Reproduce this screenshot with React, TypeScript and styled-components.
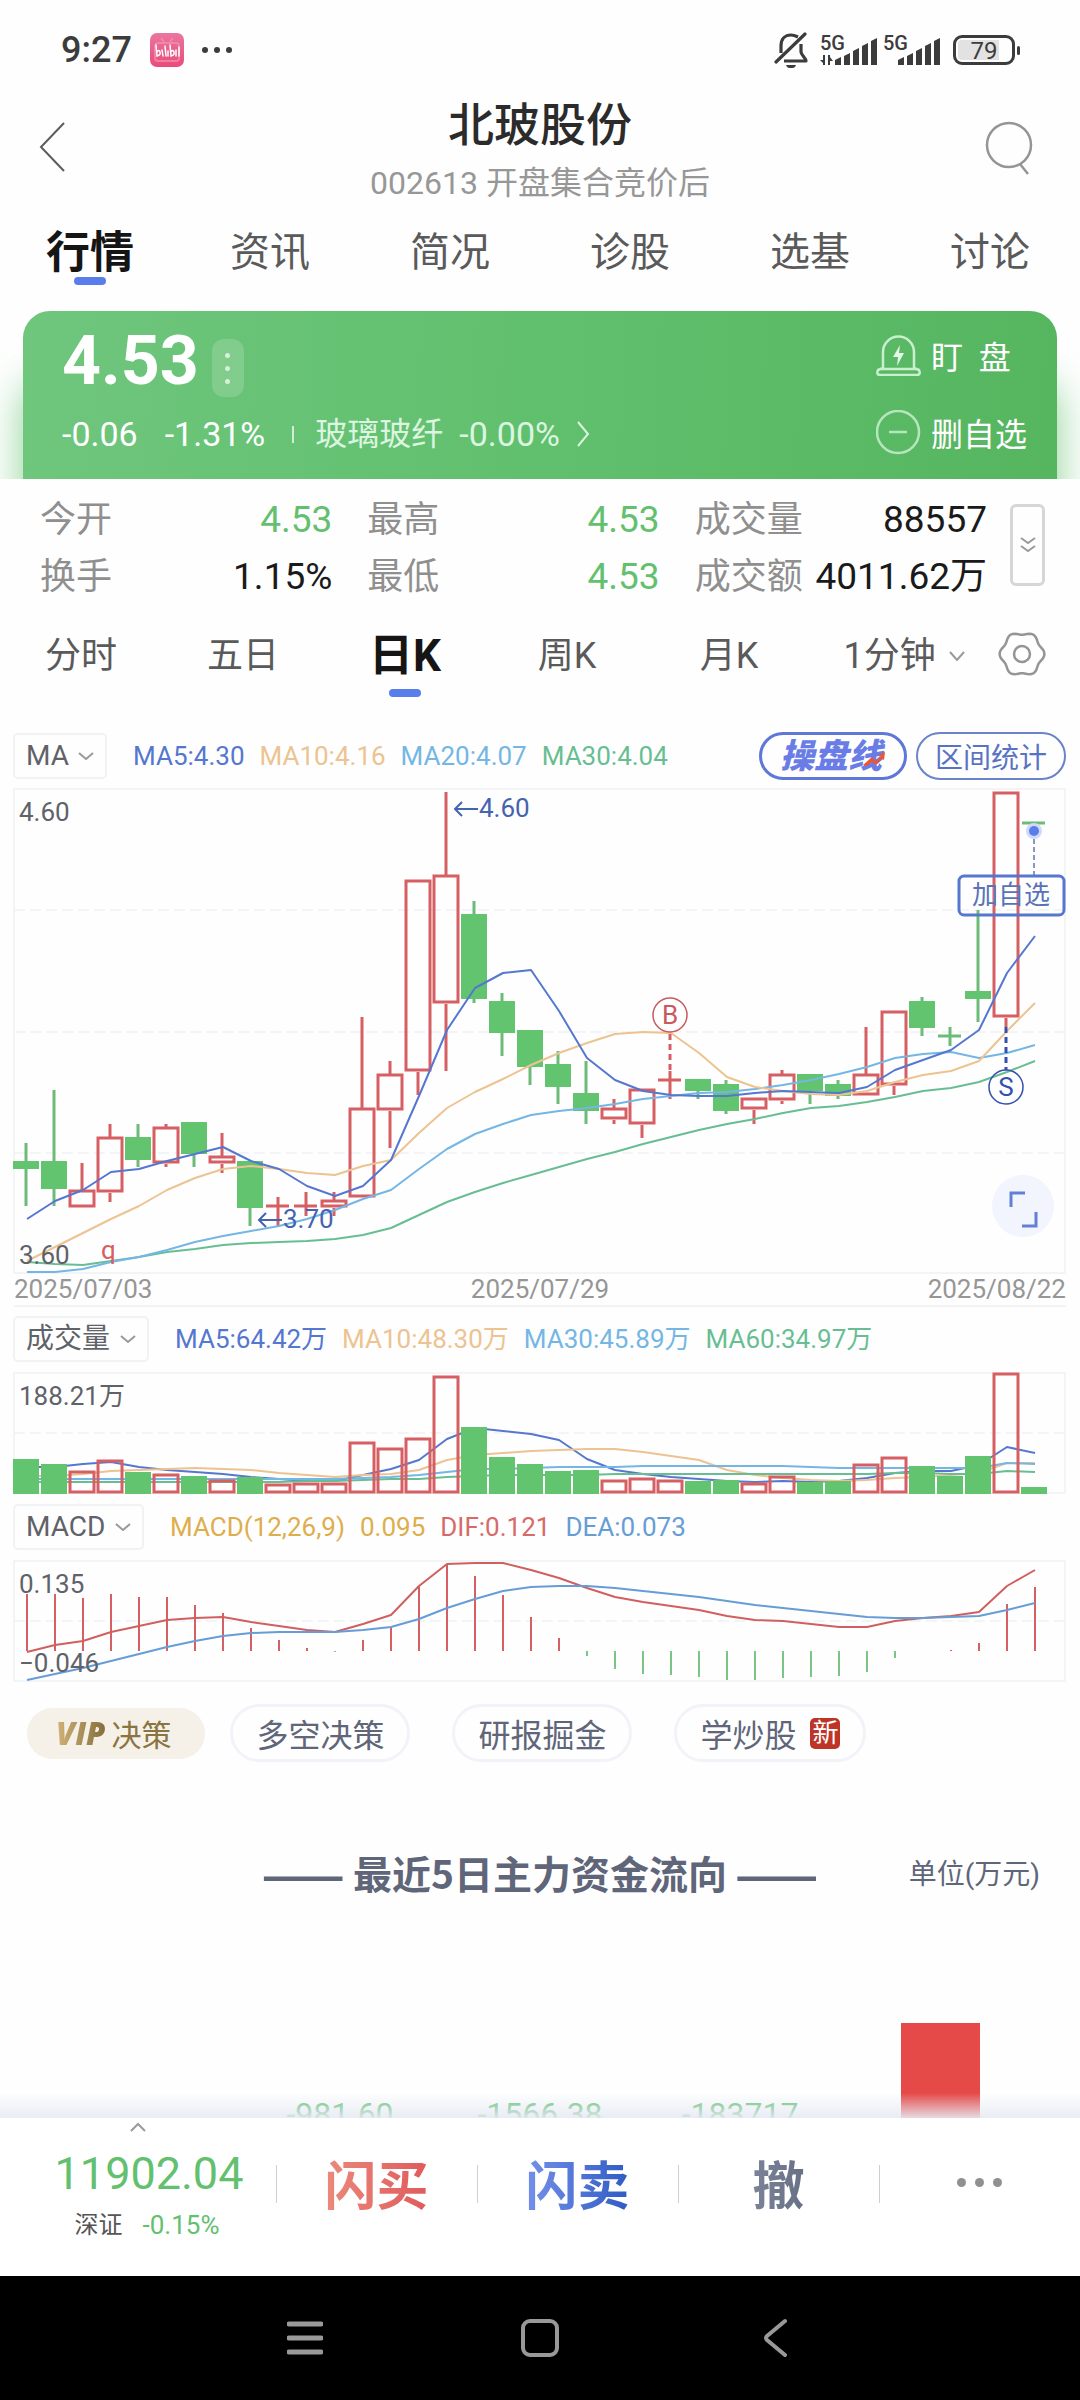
import React from 'react';
import styled, { createGlobalStyle } from 'styled-components';

const RED = '#d65f63';
const GREEN = '#63c46f';
const BLUE = '#5577cf';
const ORANGE = '#ecc391';
const SKY = '#74b6e4';
const TEAL = '#68be92';
const FONT = 'Roboto, "Noto Sans CJK SC", sans-serif';

const GlobalStyle = createGlobalStyle`
  * { box-sizing: border-box; }
  body { margin: 0; background: #fefefe; font-family: ${FONT}; color: #222; }
  button, select { font: inherit; color: inherit; background: none; border: 0; padding: 0; margin: 0; cursor: pointer; }
  a { color: inherit; text-decoration: none; }
  h1, h2, p, dl, dd { margin: 0; font-weight: 400; }
  svg { display: block; flex: none; }
`;

const Screen = styled.div`
  height: 100vh;
  display: flex;
  flex-direction: column;
  background: #fefefe;
`;

/* ---------- status bar ---------- */
const StatusBar = styled.div`
  display: flex;
  justify-content: space-between;
  align-items: center;
  height: 99px;
  flex: none;
  padding: 0 65px 0 61px;
  color: #3c3c3c;
`;
const StatusGroup = styled.div<{ $gap: number }>`
  display: flex;
  align-items: center;
  gap: ${p => p.$gap}px;
`;
const Clock = styled.span`
  font-size: 36px;
  line-height: 40px;
  font-weight: 500;
`;
const Battery = styled.div`
  position: relative;
  width: 62px;
  height: 30px;
  border: 3px solid #3c3c3c;
  border-radius: 9px;
  padding: 2px;
  &::after {
    content: '';
    position: absolute;
    right: -8px;
    top: 8px;
    width: 3px;
    height: 9px;
    border-radius: 2px;
    background: #3c3c3c;
  }
`;
const BatteryLevel = styled.div`
  width: 100%;
  height: 20px;
  border-radius: 4px;
  background: linear-gradient(90deg, #e2e2e2 79%, transparent 79%);
  text-align: center;
  font-size: 24px;
  line-height: 22px;
`;

/* ---------- header ---------- */
const Header = styled.header`
  display: grid;
  grid-template-columns: 142px 1fr 142px;
  align-items: center;
  flex: none;
`;
const HeaderButton = styled.button<{ $start?: boolean }>`
  display: flex;
  justify-content: ${p => (p.$start ? 'flex-start' : 'center')};
  && { padding: ${p => (p.$start ? '0 0 8px 38px' : '0 0 4px')}; }
`;
const Titles = styled.div`
  display: flex;
  flex-direction: column;
  align-items: center;
  gap: 12px;
`;
const StockName = styled.h1`
  && { font-weight: 500; }
  font-size: 46px;
  line-height: 52px;
  color: #2b2b2b;
`;
const StockCode = styled.p`
  font-size: 32px;
  line-height: 40px;
  color: #979797;
`;

const MainTabs = styled.nav`
  display: grid;
  grid-template-columns: repeat(6, 1fr);
  margin-top: 26px;
  flex: none;
`;
const Tab = styled.a<{ $active?: boolean; $size: number; $pad: number }>`
  position: relative;
  display: block;
  text-align: center;
  line-height: 48px;
  padding-bottom: ${p => p.$pad}px;
  font-size: ${p => (p.$active ? 44 : p.$size)}px;
  font-weight: ${p => (p.$active ? 700 : 400)};
  color: ${p => (p.$active ? '#151515' : '#5a5a5a')};
  &::after {
    content: '';
    display: ${p => (p.$active ? 'block' : 'none')};
    position: absolute;
    left: calc(50% - 16px);
    bottom: 0;
    width: 32px;
    height: 8px;
    border-radius: 4px;
    background: #5a7dec;
  }
`;

/* ---------- quote card ---------- */
const Main = styled.main`
  flex: 1;
  min-height: 0;
  overflow: hidden;
  position: relative;
`;
const CardClip = styled.section`
  overflow: hidden;
  padding: 26px 23px 0;
`;
const Card = styled.div`
  display: flex;
  justify-content: space-between;
  padding: 14px 30px 25px 39px;
  border-radius: 27px 27px 0 0;
  background: linear-gradient(93deg, #6fc67d, #5fbf6c 55%, #56b55f);
  box-shadow: 0 70px 40px rgba(99, 196, 111, 0.75);
  color: #fff;
`;
const CardLeft = styled.div`
  display: flex;
  flex-direction: column;
  gap: 17px;
`;
const PriceRow = styled.div`
  display: flex;
  align-items: flex-end;
  gap: 13px;
  height: 72px;
`;
const Price = styled.strong`
  font-size: 68px;
  line-height: 72px;
  font-weight: 700;
`;
const MoreButton = styled.button`
  display: flex;
  flex-direction: column;
  justify-content: center;
  align-items: center;
  gap: 8px;
  width: 32px;
  height: 58px;
  border-radius: 12px;
  && { background: rgba(255, 255, 255, 0.16); }
`;
const Dot = styled.span<{ $size: number; $color: string }>`
  width: ${p => p.$size}px;
  height: ${p => p.$size}px;
  border-radius: 50%;
  background: ${p => p.$color};
`;
const ChangeRow = styled.div`
  display: flex;
  align-items: center;
  font-size: 34px;
  line-height: 40px;
`;
const Change = styled.span`
  margin-right: 27px;
`;
const Divider = styled.span`
  width: 2px;
  height: 17px;
  margin-right: 21px;
  background: rgba(255, 255, 255, 0.7);
`;
const SectorLink = styled.a`
  display: flex;
  align-items: center;
  gap: 16px;
  color: #dcf5e0;
`;
const SectorName = styled.span`
  font-size: 32px;
`;
const CardActions = styled.div`
  display: flex;
  flex-direction: column;
  gap: 33px;
  padding-top: 8px;
`;
const CardAction = styled.button`
  display: flex;
  align-items: center;
  gap: 10px;
  height: 44px;
  && { font-size: 32px; }
  white-space: pre;
`;

/* ---------- stats ---------- */
const Stats = styled.section`
  display: flex;
  align-items: flex-start;
  gap: 23px;
  padding: 21px 35px 0 40px;
`;
const StatsGrid = styled.dl`
  flex: 1;
  display: grid;
  grid-template-columns: repeat(3, 1fr);
  gap: 17px 35px;
`;
const Stat = styled.div`
  display: flex;
  justify-content: space-between;
  font-size: 36px;
  line-height: 40px;
  white-space: nowrap;
`;
const StatLabel = styled.dt`
  color: #8f8f8f;
`;
const StatValue = styled.dd<{ $down?: boolean }>`
  font-size: 37px;
  color: ${p => (p.$down ? '#63c06f' : '#1a1a1a')};
`;
const ExpandButton = styled.button`
  && { border: 3px solid #d6d6d6; margin-top: 4px; }
  width: 35px;
  height: 82px;
  border-radius: 6px;
  display: flex;
  align-items: center;
  justify-content: center;
`;

/* ---------- period tabs ---------- */
const PeriodTabs = styled.nav`
  display: grid;
  grid-template-columns: repeat(5, 162fr) 188fr 82fr;
  margin-top: 35px;
`;
const SelectBox = styled.label<{ $boxed?: boolean }>`
  display: inline-grid;
  align-items: center;
  height: ${p => (p.$boxed ? 46 : 48)}px;
  border: ${p => (p.$boxed ? '2px solid #f1f2f3' : '0')};
  border-radius: 5px;
  justify-self: center;
  > * { grid-area: 1 / 1; }
  > svg { justify-self: end; margin-right: ${p => (p.$boxed ? 11 : 0)}px; pointer-events: none; }
`;
const Select = styled.select<{ $boxed?: boolean }>`
  appearance: none;
  outline: none;
  && {
    font-size: ${p => (p.$boxed ? 28 : 36)}px;
    color: ${p => (p.$boxed ? '#5f6269' : '#5a5a5a')};
    padding: ${p => (p.$boxed ? '0 36px 0 11px' : '0 28px 0 0')};
  }
  line-height: 40px;
`;
const GearButton = styled.button`
  display: flex;
  align-items: flex-start;
`;

/* ---------- charts ---------- */
const ToolRow = styled.div<{ $top: number }>`
  display: flex;
  align-items: center;
  margin-top: ${p => p.$top}px;
  padding: 0 14px 0 13px;
`;
const Legend = styled.div`
  display: flex;
  gap: 15px;
  margin-left: 26px;
  font-size: 26px;
  line-height: 32px;
  white-space: nowrap;
`;
const LegendItem = styled.span<{ $color: string }>`
  color: ${p => p.$color};
`;
const ToolButtons = styled.div`
  display: flex;
  gap: 9px;
  margin-left: auto;
`;
const Outline = styled.button<{ $brand?: boolean }>`
  && {
    border: ${p => (p.$brand ? 3 : 2)}px solid ${p => (p.$brand ? '#5f77d8' : '#6a83c9')};
    font-size: ${p => (p.$brand ? 34 : 28)}px;
    color: #5873c4;
  }
  display: flex;
  align-items: center;
  justify-content: center;
  position: relative;
  width: ${p => (p.$brand ? 148 : 150)}px;
  height: 48px;
  border-radius: 24px;
`;
const BrandText = styled.span`
  font-style: italic;
  font-weight: 900;
  line-height: 40px;
  padding-right: 4px;
  color: #6a7ce6;
`;
const BrandArrow = styled.svg`
  position: absolute;
  right: 18px;
  bottom: 11px;
`;
const ChartSvg = styled.svg<{ $top: number }>`
  width: 100%;
  height: auto;
  margin-top: ${p => p.$top}px;
  font-family: ${FONT};
  font-size: 26px;
`;
const Dates = styled.div`
  display: flex;
  justify-content: space-between;
  margin: 0 14px;
  padding-bottom: 4px;
  border-bottom: 2px solid #f2f3f4;
  font-size: 26px;
  line-height: 24px;
  color: #969696;
`;

/* ---------- shortcuts and fund flow ---------- */
const Shortcuts = styled.div`
  display: flex;
  align-items: center;
  margin-top: 18px;
  padding-left: 27px;
`;
const Shortcut = styled.a<{ $left: number }>`
  display: flex;
  align-items: center;
  gap: 14px;
  height: 58px;
  margin-left: ${p => p.$left}px;
  padding: 0 23px;
  border: 3px solid #f2f3f9;
  border-radius: 29px;
  font-size: 32px;
  color: #5f6679;
`;
const VipShortcut = styled.a`
  display: flex;
  align-items: center;
  gap: 6px;
  height: 51px;
  padding: 0 34px 0 29px;
  border-radius: 26px;
  background: #f5f0e8;
  font-size: 30px;
  color: #8a7440;
`;
const Vip = styled.em`
  font-size: 31px;
  font-family: "Open Sans", Roboto, sans-serif;
  font-weight: 800;
  background: linear-gradient(90deg, #d2b276, #85703d);
  background-clip: text;
  color: transparent;
`;
const NewBadge = styled.span`
  width: 30px;
  height: 31px;
  border-radius: 5px;
  background: #bd3527;
  color: #fff;
  font-size: 26px;
  line-height: 30px;
  text-align: center;
`;
const FlowHead = styled.div`
  display: grid;
  grid-template-columns: 1fr auto 1fr;
  align-items: center;
  margin-top: 80px;
  padding: 0 40px;
  color: #5f6679;
`;
const FlowTitle = styled.h2`
  grid-column: 2;
  && { font-weight: 700; }
  display: flex;
  gap: 8px;
  font-family: "Noto Sans CJK SC", sans-serif;
  font-size: 39px;
  line-height: 60px;
`;
const Dash = styled.span`
  font-size: 49px;
`;
const FlowUnit = styled.span`
  justify-self: end;
  font-size: 28px;
`;
const FlowChart = styled.div`
  display: grid;
  grid-template-columns: repeat(5, 1fr);
  padding: 121px 40px 0;
`;
const FlowColumn = styled.div`
  display: flex;
  flex-direction: column;
  align-items: center;
`;
const FlowBar = styled.div`
  width: 79px;
  height: 160px;
  background: #e54a48;
`;
const FlowValue = styled.span`
  margin-top: 71px;
  font-size: 32px;
  line-height: 40px;
  color: #5cbf6e;
`;
const Fade = styled.div`
  position: absolute;
  left: 0;
  right: 0;
  bottom: 0;
  height: 25px;
  background: linear-gradient(180deg, rgba(230, 234, 243, 0), rgba(230, 234, 243, 0.9));
`;

/* ---------- bottom bar ---------- */
const BottomBar = styled.footer`
  display: grid;
  grid-template-columns: 276fr repeat(4, 201fr);
  flex: none;
  height: 158px;
  background: #fff;
`;
const IndexButton = styled.button`
  display: flex;
  flex-direction: column;
  align-items: center;
  && { padding-top: 4px; color: #63c06f; }
`;
const IndexValue = styled.span`
  margin: 18px 0 13px;
  padding-left: 22px;
  font-size: 45px;
  line-height: 48px;
`;
const IndexLine = styled.span`
  display: flex;
  gap: 20px;
  padding-left: 18px;
  font-size: 26px;
  line-height: 28px;
`;
const IndexName = styled.span`
  font-size: 24px;
  color: #555;
`;
const TradeButton = styled.button<{ $from: string; $to: string }>`
  position: relative;
  height: 128px;
  && { font-size: 52px; font-weight: 700; }
  &::before {
    content: '';
    position: absolute;
    left: 0;
    top: 47px;
    width: 1px;
    height: 38px;
    background: #cfcfcf;
  }
  > span {
    background: linear-gradient(90deg, ${p => p.$from}, ${p => p.$to});
    background-clip: text;
    color: transparent;
  }
`;
const Dots = styled.span`
  && { background: none; }
  display: flex;
  justify-content: center;
  gap: 9px;
`;
const NavBar = styled.nav`
  display: grid;
  grid-template-columns: 187fr repeat(3, 235fr) 188fr;
  align-items: center;
  flex: none;
  height: 124px;
  background: #000;
`;
const NavButton = styled.button`
  display: flex;
  justify-content: center;
`;

/* ---------- chart data, in chart units ---------- */
type Candle = [kind: 'r' | 'g', top: number, bottom: number, high: number, low: number];
const candles: Candle[] = [
  ['g', 1161, 1169, 1143, 1206], ['g', 1161, 1189, 1090, 1206], ['r', 1190, 1208, 1163, 1208],
  ['r', 1137, 1193, 1124, 1202], ['g', 1137, 1160, 1124, 1167], ['r', 1127, 1164, 1124, 1167],
  ['g', 1122, 1154, 1122, 1167], ['r', 1156, 1164, 1133, 1173], ['g', 1161, 1208, 1161, 1226],
  ['r', 1206, 1206, 1197, 1226], ['r', 1206, 1206, 1192, 1216], ['r', 1200, 1208, 1192, 1216],
  ['r', 1108, 1198, 1017, 1198], ['r', 1074, 1111, 1061, 1148], ['r', 880, 1072, 880, 1095],
  ['r', 875, 1004, 792, 1071], ['g', 914, 999, 901, 1003], ['g', 1001, 1033, 993, 1056],
  ['g', 1030, 1067, 1030, 1085], ['g', 1064, 1087, 1051, 1104], ['g', 1093, 1111, 1061, 1124],
  ['r', 1108, 1120, 1099, 1124], ['r', 1089, 1125, 1089, 1138], ['r', 1080, 1080, 1071, 1099],
  ['g', 1079, 1091, 1079, 1099], ['g', 1084, 1111, 1080, 1114], ['r', 1098, 1110, 1098, 1124],
  ['r', 1074, 1101, 1070, 1104], ['g', 1074, 1091, 1074, 1104], ['g', 1084, 1096, 1080, 1099],
  ['r', 1074, 1096, 1027, 1096], ['r', 1011, 1086, 1011, 1095], ['g', 1001, 1028, 997, 1036],
  ['g', 1036, 1036, 1027, 1046], ['g', 991, 999, 910, 1022], ['r', 792, 1018, 792, 1027],
  ['g', 823, 823, 823, 823],
];
const priceLines: [string, number[]][] = [
  [TEAL, [1262, 1264, 1265, 1261, 1257, 1252, 1249, 1245, 1243, 1242, 1241, 1239, 1235, 1228, 1215, 1202, 1192, 1183, 1175, 1167, 1159, 1152, 1144, 1137, 1130, 1124, 1119, 1113, 1108, 1106, 1102, 1097, 1091, 1088, 1082, 1072, 1061]],
  [SKY, [1272, 1272, 1269, 1262, 1257, 1250, 1242, 1236, 1231, 1226, 1219, 1210, 1199, 1190, 1169, 1149, 1134, 1124, 1115, 1111, 1108, 1104, 1099, 1096, 1093, 1092, 1089, 1085, 1080, 1074, 1067, 1058, 1054, 1052, 1058, 1053, 1045]],
  [ORANGE, [1261, 1247, 1233, 1219, 1206, 1190, 1178, 1169, 1166, 1169, 1173, 1175, 1166, 1160, 1133, 1108, 1092, 1079, 1065, 1053, 1043, 1034, 1032, 1033, 1053, 1077, 1087, 1091, 1094, 1095, 1091, 1082, 1075, 1071, 1061, 1031, 1003]],
  [BLUE, [1219, 1201, 1190, 1172, 1169, 1161, 1154, 1147, 1161, 1169, 1186, 1196, 1186, 1160, 1096, 1030, 988, 973, 970, 1011, 1058, 1080, 1091, 1095, 1096, 1096, 1093, 1091, 1092, 1093, 1087, 1070, 1060, 1050, 1030, 973, 936]],
];
const volumes = [1458, 1463, 1470, 1459, 1471, 1473, 1475, 1479, 1476, 1483, 1482, 1482, 1441, 1447, 1437, 1375, 1426, 1456, 1463, 1470, 1469, 1479, 1477, 1479, 1480, 1479, 1482, 1475, 1481, 1480, 1463, 1456, 1465, 1475, 1455, 1372, 1486];
const volumeLines: [string, number[]][] = [
  [BLUE, [1466, 1466, 1463, 1461, 1466, 1469, 1471, 1473, 1476, 1478, 1480, 1480, 1474, 1468, 1459, 1438, 1427, 1430, 1433, 1439, 1458, 1469, 1473, 1476, 1478, 1480, 1481, 1480, 1481, 1480, 1477, 1472, 1470, 1470, 1464, 1446, 1452]],
  [ORANGE, [1475, 1475, 1473, 1470, 1469, 1468, 1467, 1468, 1469, 1472, 1474, 1476, 1474, 1473, 1469, 1459, 1454, 1452, 1450, 1449, 1448, 1448, 1451, 1455, 1459, 1469, 1474, 1477, 1479, 1480, 1479, 1477, 1476, 1474, 1472, 1462, 1462]],
  [TEAL, [1481, 1481, 1481, 1481, 1481, 1481, 1481, 1481, 1481, 1481, 1480, 1480, 1479, 1478, 1478, 1476, 1475, 1474, 1474, 1474, 1474, 1473, 1473, 1473, 1473, 1473, 1473, 1473, 1473, 1473, 1473, 1472, 1472, 1473, 1473, 1470, 1471]],
  [SKY, [1478, 1478, 1478, 1478, 1478, 1478, 1478, 1478, 1478, 1478, 1478, 1478, 1477, 1476, 1474, 1471, 1468, 1468, 1467, 1466, 1466, 1466, 1465, 1465, 1465, 1465, 1465, 1465, 1466, 1467, 1467, 1467, 1467, 1467, 1467, 1462, 1463]],
];
const macdBars = [1593, 1593, 1597, 1593, 1596, 1596, 1604, 1612, 1627, 1639, 1647, 1651, 1639, 1626, 1585, 1563, 1575, 1594, 1616, 1637, 1655, 1668, 1673, 1674, 1676, 1679, 1679, 1677, 1676, 1675, 1671, 1657, 1650, 1649, 1642, 1603, 1586];
const macdLines: [string, number[]][] = [
  ['#d0605f', [1651, 1644, 1640, 1631, 1625, 1619, 1617, 1616, 1621, 1625, 1629, 1631, 1623, 1614, 1585, 1563, 1562, 1562, 1569, 1577, 1587, 1596, 1601, 1605, 1609, 1615, 1619, 1620, 1623, 1626, 1626, 1620, 1617, 1615, 1611, 1585, 1569]],
  ['#669dd6', [1679, 1673, 1667, 1660, 1653, 1646, 1640, 1635, 1632, 1631, 1631, 1631, 1629, 1626, 1618, 1607, 1598, 1590, 1586, 1585, 1585, 1587, 1590, 1593, 1596, 1600, 1604, 1607, 1610, 1613, 1616, 1617, 1617, 1616, 1615, 1609, 1602]],
];

const STEP = 28;
const slot = (i: number) => 26 + STEP * i;

function Lines({ lines }: { lines: [string, number[]][] }) {
  return (
    <>
      {lines.map(([color, ys]) => (
        <polyline
          key={color}
          points={ys.map((y, i) => `${slot(i) + 1},${y}`).join(' ')}
          fill="none"
          stroke={color}
          strokeWidth="2"
          strokeLinejoin="round"
        />
      ))}
    </>
  );
}

function Frame({ top, bottom, grid }: { top: number; bottom: number; grid: number[] }) {
  return (
    <g fill="none" stroke="#f3f4f5" strokeWidth="2">
      <rect x="14" y={top} width="1051" height={bottom - top} />
      {grid.map(y => (
        <line key={y} x1="14" x2="1065" y1={y} y2={y} strokeDasharray="11 5" />
      ))}
    </g>
  );
}

function CandleMark({ i, data }: { i: number; data: Candle }) {
  const [kind, top, bottom, high, low] = data;
  const x = slot(i);
  const color = kind === 'r' ? RED : GREEN;
  const wick = kind === 'r' ? RED : '#6dbb78';
  if (top === bottom) {
    return (
      <g stroke={wick} strokeWidth="3">
        <line x1={x - 12} x2={x + 11} y1={top} y2={top} />
        <line x1={x} x2={x} y1={high} y2={low} />
      </g>
    );
  }
  return (
    <g stroke={wick} strokeWidth="3">
      <line x1={x} x2={x} y1={high} y2={top} />
      <line x1={x} x2={x} y1={bottom} y2={low} />
      {kind === 'g' ? (
        <rect x={x - 13} y={top} width="26" height={bottom - top} fill={color} stroke="none" />
      ) : (
        <rect x={x - 12} y={top + 1} width="24" height={bottom - top - 3} fill="none" />
      )}
    </g>
  );
}

function PriceChart() {
  return (
    <ChartSvg $top={5} viewBox="0 785 1080 492" role="img" aria-label="日K">
      <Frame top={789} bottom={1273} grid={[910, 1032, 1153]} />
      {candles.map((c, i) => <CandleMark key={i} i={i} data={c} />)}
      <Lines lines={priceLines} />
      <g fill="#5f6269">
        <text x="19" y="821">4.60</text>
        <text x="19" y="1264">3.60</text>
      </g>
      <text x="101" y="1259" fill={RED}>q</text>
      <g fill="#4463b0">
        <text x="479" y="817">4.60</text>
        <text x="283" y="1228">3.70</text>
      </g>
      <g fill="none" stroke="#4463b0" strokeWidth="2">
        <path d="M478 809H455M462 802l-7 7 7 7" />
        <path d="M282 1220H259M266 1213l-7 7 7 7" />
      </g>
      <line x1="670" x2="670" y1="1034" y2="1074" stroke={RED} strokeWidth="3" strokeDasharray="6 4" />
      <circle cx="670" cy="1015" r="17" fill="#fefefe" stroke="#c8595c" strokeWidth="1.5" />
      <text x="670" y="1024" textAnchor="middle" fill="#c8595c">B</text>
      <line x1="1006" x2="1006" y1="1027" y2="1070" stroke="#3450ae" strokeWidth="3" strokeDasharray="6 4" />
      <circle cx="1006" cy="1087" r="17" fill="none" stroke="#3450ae" strokeWidth="1.5" />
      <text x="1006" y="1096" textAnchor="middle" fill="#3450ae">S</text>
      <line x1="1034" x2="1034" y1="823" y2="875" stroke="#6279ad" strokeWidth="1.5" strokeDasharray="5 3" />
      <circle cx="1034" cy="831" r="8" fill="#cfd9f9" />
      <circle cx="1034" cy="831" r="5" fill="#5a7dec" />
      <rect x="959" y="876" width="105" height="39" rx="5" fill="none" stroke="#5577cf" strokeWidth="3" />
      <text x="1011" y="904" textAnchor="middle" fill="#5873b8">加自选</text>
      <circle cx="1023" cy="1206" r="31" fill="#f2f5fd" />
      <path d="M1011 1207v-14h14M1036 1212v14h-14" fill="none" stroke="#6480d6" strokeWidth="3" />
    </ChartSvg>
  );
}

function VolumeChart() {
  return (
    <ChartSvg $top={6} viewBox="0 1367 1080 130" role="img" aria-label="成交量">
      <Frame top={1372} bottom={1492} grid={[1432]} />
      <Lines lines={volumeLines} />
      {volumes.map((y, i) => {
        const x = slot(i);
        return candles[i][0] === 'g'
          ? <rect key={i} x={x - 13} y={y} width="26" height={1493 - y} fill={GREEN} />
          : <rect key={i} x={x - 12} y={y + 1} width="24" height={1490 - y} fill="none" stroke={RED} strokeWidth="3" />;
      })}
      <text x="19" y="1404" fill="#5f6269">188.21万</text>
    </ChartSvg>
  );
}

function MacdChart() {
  return (
    <ChartSvg $top={6} viewBox="0 1555 1080 130" role="img" aria-label="MACD">
      <Frame top={1560} bottom={1680} grid={[1620]} />
      {macdBars.map((y, i) => (
        <rect key={i} x={slot(i)} width="2" y={Math.min(y, 1650)} height={Math.abs(y - 1650)} fill={y < 1650 ? RED : '#7ac486'} />
      ))}
      <Lines lines={macdLines} />
      <g fill="#5f6269">
        <text x="19" y="1592">0.135</text>
        <text x="19" y="1671">−0.046</text>
      </g>
    </ChartSvg>
  );
}

/* ---------- icons ---------- */
const Chevron = ({ w = 16, h = 8, d, color = '#9a9a9a', sw = 2 }: { w?: number; h?: number; d?: string; color?: string; sw?: number }) => (
  <svg width={w} height={h} viewBox={`0 0 ${w} ${h}`} fill="none" stroke={color} strokeWidth={sw}>
    <path d={d ?? `M1 1l${w / 2 - 1} ${h - 2} ${w / 2 - 1} -${h - 2}`} />
  </svg>
);

const gearPath = Array.from({ length: 73 }, (_, k) => {
  const a = (k / 72) * Math.PI * 2;
  const r = 20.8 + 1.6 * Math.cos(6 * a);
  return `${k ? 'L' : 'M'}${(24 + r * Math.cos(a)).toFixed(2)} ${(22 + r * Math.sin(a)).toFixed(2)}`;
}).join('');

const GearIcon = () => (
  <svg width="48" height="48" viewBox="0 0 48 48" fill="none" stroke="#959595" strokeWidth="2.5">
    <path d={gearPath + 'Z'} />
    <circle cx="24" cy="22" r="8" />
  </svg>
);

const SilentIcon = () => (
  <svg width="34" height="38" viewBox="0 0 34 38" fill="none" stroke="#3c3c3c" strokeWidth="3.2">
    <path d="M7 22V15C7 8 11 4 17 4c3 0 5 1 7 2M27 13v8c0 3 5 6 5 9H10" strokeLinejoin="round" />
    <path d="M31 3L2 31" strokeLinecap="round" />
    <path d="M12 34h10c-1 3-3 3-5 3s-4 0-5-3z" fill="#3c3c3c" stroke="none" />
  </svg>
);

const SignalIcon = ({ data }: { data?: boolean }) => (
  <svg width="58" height="42" viewBox="0 -6 58 42" fill="#3c3c3c" fontFamily={FONT}>
    <text x="0" y="15" fontSize="20" fontWeight="500">5G</text>
    {[8, 12, 17, 22, 27].map((h, i) => (
      <path key={h} d={`M${15 + i * 9} 30v${-h + 3}l6-3v${h}z`} strokeLinejoin="round" />
    ))}
    {data && <path d="M3 20h2v10H3zM0 25h3v3zM8 20h2v10H8zM10 22l3 4h-3z" />}
  </svg>
);

const BiliIcon = () => (
  <svg width="34" height="34" viewBox="0 0 34 34">
    <defs>
      <linearGradient id="bili" x1="0" y1="0" x2="0" y2="1">
        <stop offset="0" stopColor="#ea76a1" />
        <stop offset="1" stopColor="#ea4b78" />
      </linearGradient>
    </defs>
    <rect width="34" height="34" rx="7" fill="url(#bili)" />
    <path d="M11 5l3 4M23 5l-3 4M8 10h18q3 0 3 3v12q0 3-3 3H8q-3 0-3-3V13q0-3 3-3z" fill="none" stroke="#f59ab8" strokeWidth="2" opacity=".6" />
    <path d="M6 12l1 11q4-1 3-4t-3 0M12 17l1 6M15 13l1 10M18 18v5M20 12l1 11q4-1 3-4t-3 0M26 17v6M29 14v9" fill="none" stroke="#fff" strokeWidth="1.5" strokeLinecap="round" />
  </svg>
);

const AlarmIcon = () => (
  <svg width="45" height="42" viewBox="0 0 45 42" fill="none" stroke="#c9efcf" strokeWidth="2.5">
    <path d="M7 34V18a15.500 15.500 0 0 1 31 0v16l5 2q2 5-2 5H4q-4 0-2-5zM5 35h35" strokeLinejoin="round" />
    <path d="M24 11l-7 12h5l-1 9 7-13h-5z" fill="#e4f8e7" stroke="none" />
  </svg>
);

const MinusIcon = () => (
  <svg width="45" height="45" viewBox="0 0 45 45" fill="none" stroke="#b5e6bd" strokeWidth="2.5">
    <circle cx="22" cy="22" r="21" />
    <path d="M13 22h18" />
  </svg>
);

/* ---------- page ---------- */
const mainTabs = ['行情', '资讯', '简况', '诊股', '选基', '讨论'];
const stats: [string, string, boolean][] = [
  ['今开', '4.53', true], ['最高', '4.53', true], ['成交量', '88557', false],
  ['换手', '1.15%', false], ['最低', '4.53', true], ['成交额', '4011.62万', false],
];
const periods = ['分时', '五日', '日K', '周K', '月K'];

function Picker({ label }: { label: string }) {
  return (
    <SelectBox $boxed>
      <Select $boxed aria-label={label}><option>{label}</option></Select>
      <Chevron w={16} h={8} />
    </SelectBox>
  );
}

export default function App() {
  return (
    <Screen>
      <GlobalStyle />
      <StatusBar>
        <StatusGroup $gap={18}>
          <Clock>9:27</Clock>
          <BiliIcon />
          <StatusGroup $gap={6}>
            {[0, 1, 2].map(i => <Dot key={i} $size={6} $color="#3c3c3c" />)}
          </StatusGroup>
        </StatusGroup>
        <StatusGroup $gap={12}>
          <SilentIcon />
          <StatusGroup $gap={5}>
            <SignalIcon data />
            <SignalIcon />
          </StatusGroup>
          <Battery><BatteryLevel>79</BatteryLevel></Battery>
        </StatusGroup>
      </StatusBar>

      <Header>
        <HeaderButton $start aria-label="返回">
          <Chevron w={28} h={52} d="M26 2L3 26l23 24" color="#5c5c5c" />
        </HeaderButton>
        <Titles>
          <StockName>北玻股份</StockName>
          <StockCode>002613 开盘集合竞价后</StockCode>
        </Titles>
        <HeaderButton aria-label="搜索">
          <svg width="48" height="56" viewBox="0 0 48 56" fill="none" stroke="#959595" strokeWidth="2.5">
            <circle cx="24" cy="24" r="22" />
            <path d="M35 43l8 10" />
          </svg>
        </HeaderButton>
      </Header>

      <MainTabs>
        {mainTabs.map((t, i) => (
          <Tab key={t} href="#" $active={i === 0} $size={40} $pad={8}>{t}</Tab>
        ))}
      </MainTabs>

      <Main>
        <CardClip>
          <Card>
            <CardLeft>
              <PriceRow>
                <Price>4.53</Price>
                <MoreButton aria-label="更多">
                  {[0, 1, 2].map(i => <Dot key={i} $size={5} $color="#d5f1d9" />)}
                </MoreButton>
              </PriceRow>
              <ChangeRow>
                <Change>-0.06</Change>
                <Change>-1.31%</Change>
                <Divider />
                <SectorLink href="#">
                  <SectorName>玻璃玻纤</SectorName>
                  <span>-0.00%</span>
                  <Chevron w={14} h={26} d="M2 1l10 12L2 25" color="#dcf5e0" />
                </SectorLink>
              </ChangeRow>
            </CardLeft>
            <CardActions>
              <CardAction><AlarmIcon />盯  盘</CardAction>
              <CardAction><MinusIcon />删自选</CardAction>
            </CardActions>
          </Card>
        </CardClip>

        <Stats>
          <StatsGrid>
            {stats.map(([label, value, down]) => (
              <Stat key={label}>
                <StatLabel>{label}</StatLabel>
                <StatValue $down={down}>{value}</StatValue>
              </Stat>
            ))}
          </StatsGrid>
          <ExpandButton aria-label="展开">
            <Chevron w={16} h={16} d="M1 1l7 5 7-5M1 9l7 5 7-5" />
          </ExpandButton>
        </Stats>

        <PeriodTabs>
          {periods.map((t, i) => (
            <Tab key={t} href="#" $active={i === 2} $size={36} $pad={17}>{t}</Tab>
          ))}
          <SelectBox>
            <Select aria-label="分钟周期"><option>1分钟</option></Select>
            <Chevron w={16} h={10} />
          </SelectBox>
          <GearButton aria-label="设置"><GearIcon /></GearButton>
        </PeriodTabs>

        <ToolRow $top={35}>
          <Picker label="MA" />
          <Legend>
            <LegendItem $color={BLUE}>MA5:4.30</LegendItem>
            <LegendItem $color={ORANGE}>MA10:4.16</LegendItem>
            <LegendItem $color={SKY}>MA20:4.07</LegendItem>
            <LegendItem $color={TEAL}>MA30:4.04</LegendItem>
          </Legend>
          <ToolButtons>
            <Outline $brand>
              <BrandText>操盘线</BrandText>
              <BrandArrow width="24" height="15" viewBox="0 0 24 15">
                <path d="M1 14l9-8 4 4 5-5-3-1 7-3-1 8-2-1-6 6-4-3-6 5z" fill="#e4583f" />
              </BrandArrow>
            </Outline>
            <Outline>区间统计</Outline>
          </ToolButtons>
        </ToolRow>
        <PriceChart />
        <Dates>
          <span>2025/07/03</span>
          <span>2025/07/29</span>
          <span>2025/08/22</span>
        </Dates>

        <ToolRow $top={9}>
          <Picker label="成交量" />
          <Legend>
            <LegendItem $color={BLUE}>MA5:64.42万</LegendItem>
            <LegendItem $color={ORANGE}>MA10:48.30万</LegendItem>
            <LegendItem $color={SKY}>MA30:45.89万</LegendItem>
            <LegendItem $color={TEAL}>MA60:34.97万</LegendItem>
          </Legend>
        </ToolRow>
        <VolumeChart />

        <ToolRow $top={6}>
          <Picker label="MACD" />
          <Legend>
            <LegendItem $color="#dfae4c">MACD(12,26,9)</LegendItem>
            <LegendItem $color="#dfae4c">0.095</LegendItem>
            <LegendItem $color="#d76a68">DIF:0.121</LegendItem>
            <LegendItem $color="#669dd6">DEA:0.073</LegendItem>
          </Legend>
        </ToolRow>
        <MacdChart />

        <Shortcuts>
          <VipShortcut href="#"><Vip>VIP</Vip>决策</VipShortcut>
          <Shortcut href="#" $left={25}>多空决策</Shortcut>
          <Shortcut href="#" $left={42}>研报掘金</Shortcut>
          <Shortcut href="#" $left={42}>学炒股<NewBadge>新</NewBadge></Shortcut>
        </Shortcuts>

        <FlowHead>
          <FlowTitle><Dash>——</Dash>最近5日主力资金流向<Dash>——</Dash></FlowTitle>
          <FlowUnit>单位(万元)</FlowUnit>
        </FlowHead>
        <FlowChart>
          <FlowColumn />
          <FlowColumn><FlowValue>-981.60</FlowValue></FlowColumn>
          <FlowColumn><FlowValue>-1566.38</FlowValue></FlowColumn>
          <FlowColumn><FlowValue>-183717</FlowValue></FlowColumn>
          <FlowColumn><FlowBar /></FlowColumn>
        </FlowChart>
        <Fade />
      </Main>

      <BottomBar>
        <IndexButton>
          <Chevron w={16} h={10} d="M1 9l7-7 7 7" />
          <IndexValue>11902.04</IndexValue>
          <IndexLine>
            <IndexName>深证</IndexName>
            <span>-0.15%</span>
          </IndexLine>
        </IndexButton>
        <TradeButton $from="#ea8a7b" $to="#e05a5c"><span>闪买</span></TradeButton>
        <TradeButton $from="#7590ea" $to="#2f5bc4"><span>闪卖</span></TradeButton>
        <TradeButton $from="#7b8398" $to="#687085"><span>撤</span></TradeButton>
        <TradeButton $from="#999" $to="#999" aria-label="更多交易">
          <Dots>{[0, 1, 2].map(i => <Dot key={i} $size={9} $color="#909090" />)}</Dots>
        </TradeButton>
      </BottomBar>

      <NavBar>
        <span />
        <NavButton aria-label="最近任务">
          <svg width="36" height="36" viewBox="0 0 36 36" stroke="#999" strokeWidth="5" strokeLinecap="round">
            <path d="M2 4h32M2 18h32M2 32h32" />
          </svg>
        </NavButton>
        <NavButton aria-label="主页">
          <svg width="40" height="40" viewBox="0 0 40 40" fill="none" stroke="#999" strokeWidth="4">
            <rect x="3" y="3" width="34" height="34" rx="7" />
          </svg>
        </NavButton>
        <NavButton aria-label="后退">
          <svg width="24" height="40" viewBox="0 0 24 40" fill="none" stroke="#999" strokeWidth="4" strokeLinecap="round" strokeLinejoin="round">
            <path d="M22 3L4 18q-2 2 0 4l18 15" />
          </svg>
        </NavButton>
      </NavBar>
    </Screen>
  );
}
